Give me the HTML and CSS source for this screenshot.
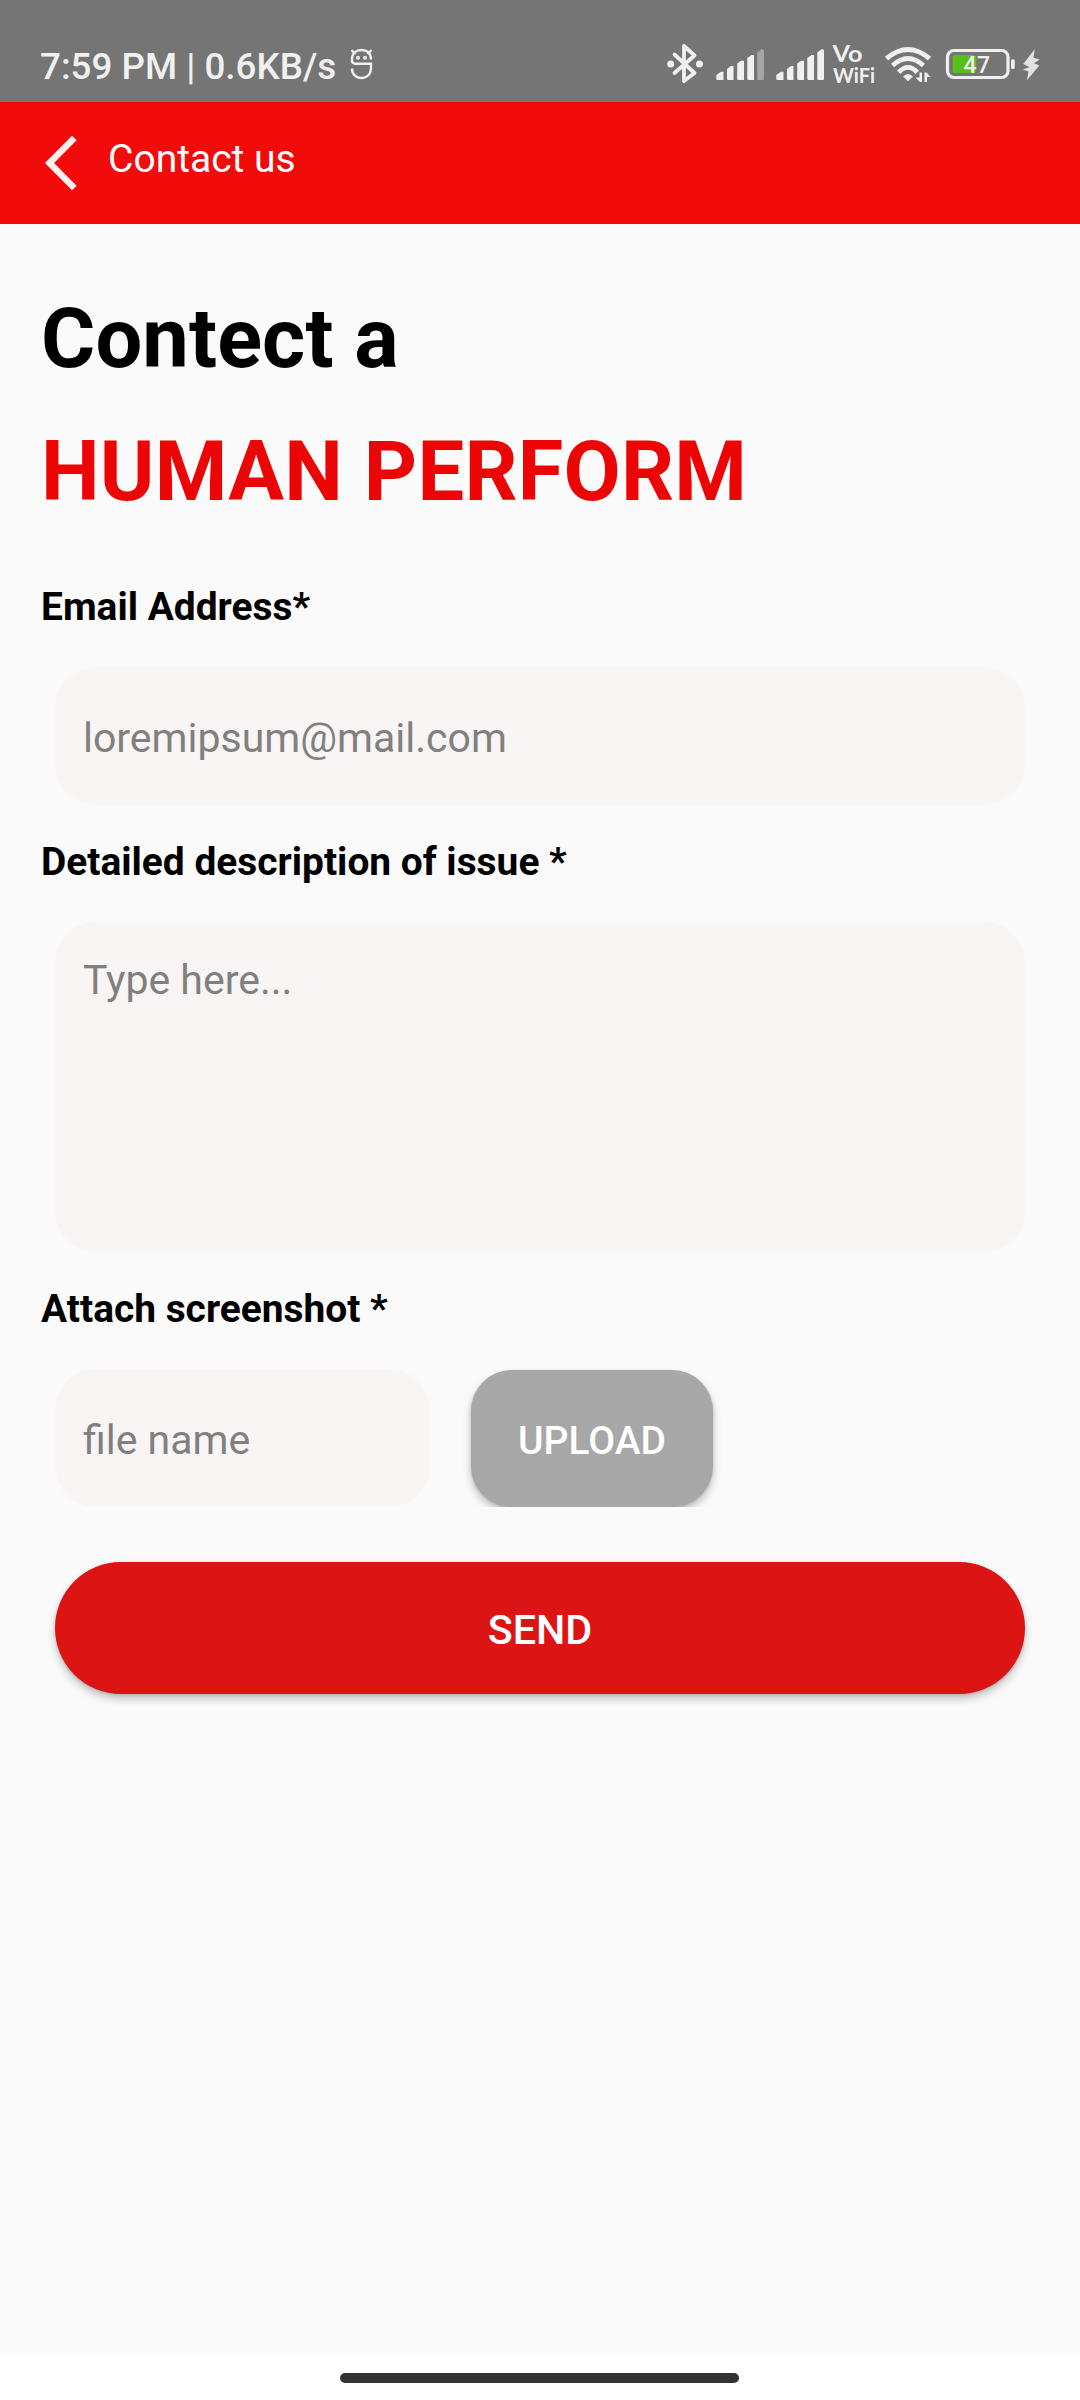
FILE: index.html
```html
<!DOCTYPE html>
<html lang="en">
<head>
<meta charset="utf-8">
<title>Contact us</title>
<link rel="stylesheet" href="styles.css">
</head>
<body>
<div class="screen">
  <div class="status-bar">
    <span class="status-text">7:59 PM | 0.6KB/s</span>
    <svg class="icon-app" width="24" height="34" viewBox="350 47 24 34" fill="none" stroke="#f0f0f0" stroke-width="2.400">
      <path d="M371 59.500C371 53 367 50 361.500 50S352 53 352 59.500V60.500Q352 63.700 355 63.700H371V68C371 74 367 78 361.500 78S352 74 352 68.500"/>
      <path d="M351.500 50L355.500 54M371.500 50L367.500 54"/>
      <circle cx="358" cy="57.700" r=".800"/><circle cx="365" cy="57.700" r=".800"/>
    </svg>
    <svg class="status-icons" width="380" height="50" viewBox="664 40 380 50" fill="#f0f0f0">
      <!-- bluetooth -->
      <path d="M674.500 54.500L694.500 73L684 81V46L694.500 55.500L674.500 73" fill="none" stroke="#f0f0f0" stroke-width="3.800" stroke-linecap="round" stroke-linejoin="round"/>
      <circle cx="670.700" cy="64" r="3.500"/><circle cx="699.500" cy="64" r="3.500"/>
      <!-- mobile signal -->
      <path d="M716.300 75L721 71.700H723.500V80H717.500Q716.300 80 716.300 78.800ZM727 69L731 66H733.500V80H728.200Q727 80 727 78.800ZM737.200 63.500L741 60.700H744V80H738.400Q737.200 80 737.200 78.800ZM747.300 58L751.500 55H754V80H748.500Q747.300 80 747.300 78.800Z"/>
      <path d="M757.300 52.500L761.500 49.300H762.500Q764 49.300 764 50.800V78.800Q764 80 762.800 80H758.500Q757.300 80 757.300 78.800Z" opacity=".4"/>
      <path d="M776.300 75L781 71.700H783.500V80H777.500Q776.300 80 776.300 78.800ZM787 69L791 66H793.500V80H788.200Q787 80 787 78.800ZM797.200 63.500L801 60.700H804V80H798.400Q797.200 80 797.200 78.800ZM807.300 58L811.500 55H814V80H808.500Q807.300 80 807.300 78.800ZM817.300 52.500L821.500 49.300H822.500Q824 49.300 824 50.800V78.800Q824 80 822.800 80H818.500Q817.300 80 817.300 78.800Z"/>
      <text class="vo" x="832.500" y="62" textLength="30" lengthAdjust="spacingAndGlyphs">Vo</text>
      <text class="vo wifi-label" x="833" y="82.500" textLength="42" lengthAdjust="spacingAndGlyphs">WiFi</text>
      <!-- wi-fi -->
      <g fill="none" stroke="#f0f0f0" stroke-width="4.900">
        <path d="M886.500 58.500Q908 40.500 929.500 58.500"/>
        <path d="M892.500 65.500Q908 51.500 923.500 65.500"/>
        <path d="M898.700 72.300Q908 62.500 917.300 72.300"/>
      </g>
      <path d="M903 76.500Q908 71.500 913 76.500L908 81.300Z"/>
      <path d="M919.500 72.500H922V82H920L915.500 77.500H919.500ZM924.500 82V72.500H926.500L930.500 77H927V82Z"/>
      <!-- battery -->
      <rect x="947.500" y="50.500" width="60.500" height="27" rx="6.500" fill="none" stroke="#f0f0f0" stroke-width="3.200"/>
      <rect x="952.700" y="55" width="23.500" height="18" rx="2.500" fill="#58bf1a"/>
      <rect x="1011" y="59.200" width="3.700" height="9.800" rx="1.500"/>
      <text class="level" x="963.500" y="72.800" textLength="26.500">47</text>
      <!-- charging -->
      <path d="M1034.700 49.300L1023.200 64L1029.500 67L1022.800 69.500L1028.500 71.500L1027 80.300L1039.300 65.500L1034 63.200L1039.700 59.500L1033.500 57.700Z" fill="#e2e2e2"/>
    </svg>
  </div>

  <header class="app-bar">
    <svg class="back" width="34" height="58" viewBox="43 134 34 58" fill="none" stroke="#fff0f0" stroke-width="6.500"><path d="M74.300 138L49.500 163L74.300 188"/></svg>
    <span class="app-title">Contact us</span>
  </header>

  <main class="content">
    <h1 class="heading">Contect a</h1>
    <h2 class="heading heading-brand">HUMAN PERFORM</h2>
    <form class="form">
      <label class="label" for="email">Email Address*</label>
      <input class="field" id="email" type="email" placeholder="loremipsum@mail.com">
      <label class="label" for="issue">Detailed description of issue *</label>
      <textarea class="field field-area" id="issue" placeholder="Type here..."></textarea>
      <label class="label" for="file">Attach screenshot *</label>
      <div class="attach">
        <input class="field field-file" id="file" type="text" placeholder="file name">
        <button class="button upload" type="button">UPLOAD</button>
      </div>
      <button class="button send" type="button">SEND</button>
    </form>
  </main>

  <div class="nav-bar"><div class="nav-handle"></div></div>
</div>
</body>
</html>
```

FILE: styles.css
```css
* {
  box-sizing: border-box;
}

body {
  margin: 0;
  font-family: Roboto, sans-serif;
  background: #fafafa;
}

.screen {
  display: flex;
  flex-direction: column;
  width: 1080px;
  height: 2400px;
  overflow: hidden;
}

.status-bar {
  display: flex;
  align-items: flex-start;
  height: 102px;
  padding: 40px 36px 0 40px;
  background: #757575;
  color: #f0f0f0;
}

.status-text {
  width: 310px;
  font-size: 36.75px;
  font-weight: 500;
  line-height: 53px;
  white-space: nowrap;
}

.icon-app {
  margin-top: 7px;
}

.status-icons {
  margin-left: auto;
}

.vo {
  font: 700 23px Lato, sans-serif;
}

.wifi-label {
  font-size: 21px;
}

.level {
  font: 500 23px Roboto, sans-serif;
}

.app-bar {
  display: flex;
  align-items: flex-start;
  gap: 31px;
  height: 122px;
  padding: 32px 43px 0;
  background: #f20b0a;
}

.app-title {
  padding-top: 2px;
  color: #fff;
  font-size: 39px;
  line-height: 46px;
}

.content {
  flex: 1;
  padding: 65px 55px 0 41px;
}

.heading {
  margin: 0 0 33px;
  color: #000;
  font-size: 83px;
  font-weight: 700;
  line-height: 100px;
  letter-spacing: .1px;
}

.heading-brand {
  margin-bottom: 62px;
  color: #eb0505;
  letter-spacing: .2px;
}

.form {
  display: flex;
  flex-direction: column;
}

.label {
  color: #000;
  font-size: 38.9px;
  font-weight: 700;
  line-height: 46px;
  margin-bottom: 37px;
}

.field {
  display: block;
  height: 138px;
  margin: 0 0 34px 14px;
  padding: 4px 28px 0;
  border: 0;
  border-radius: 41px;
  outline: 0;
  background: #f9f5f4;
  font: 400 41px Roboto, sans-serif;
}

.field::placeholder {
  color: #808080;
  opacity: 1;
}

.field-area {
  height: 330px;
  padding-top: 34px;
  line-height: 48px;
  resize: none;
}

.attach {
  display: flex;
  gap: 41px;
  height: 138px;
  margin-bottom: 55px;
  overflow: hidden;
}

.field-file {
  width: 375px;
}

.button {
  border: 0;
  color: #fff;
  font-family: Roboto, sans-serif;
  font-weight: 500;
  box-shadow: 0 5px 9px rgba(0, 0, 0, .22), 0 1px 3px rgba(0, 0, 0, .15);
}

.upload {
  width: 242px;
  height: 137px;
  margin-top: 1px;
  padding: 4px 0 0;
  border-radius: 41px;
  background: #a8a8a8;
  font-size: 39px;
}

.send {
  height: 132px;
  margin-left: 14px;
  padding: 4px 0 0;
  border-radius: 66px;
  background: #dc1414;
  font-size: 41.25px;
}

.nav-bar {
  display: flex;
  height: 44px;
  padding: 17px 0 0 340px;
  background: #fff;
}

.nav-handle {
  width: 399px;
  height: 10px;
  border-radius: 5px;
  background: #333;
}
```
